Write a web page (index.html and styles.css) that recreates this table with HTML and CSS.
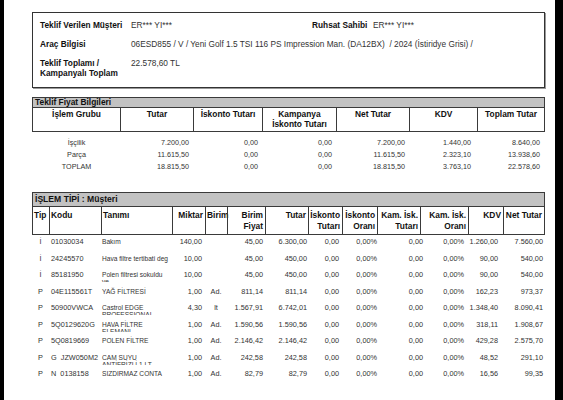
FILE: index.html
```html
<!DOCTYPE html>
<html lang="tr">
<head>
    <meta charset="UTF-8">
    <meta name="viewport" content="width=device-width, initial-scale=1.0">
    <title>Teklif</title>
    <link rel="stylesheet" href="styles.css">
</head>
<body>
    <div class="page">
        <!-- müşteri / araç -->
        <div class="info-box">
            <div class="info-row">
                <div class="info-label">Teklif Verilen Müşteri</div>
                <div class="info-value short">ER*** YI***</div>
                <div class="info-label owner">Ruhsat Sahibi</div>
                <div class="info-value">ER*** YI***</div>
            </div>
            <div class="info-row">
                <div class="info-label">Araç Bilgisi</div>
                <div class="info-value">06ESD855 / V / Yeni Golf 1.5 TSI 116 PS Impression Man. (DA12BX)&nbsp; / 2024 (İstiridye Grisi) /</div>
            </div>
            <div class="info-row">
                <div class="info-label">Teklif Toplamı /<br>Kampanyalı Toplam</div>
                <div class="info-value">22.578,60 TL</div>
            </div>
        </div>

        <!-- fiyat bilgileri -->
        <div class="price-section">
            <div class="bar price-bar">Teklif Fiyat Bilgileri</div>
            <div class="price-head">
                <div>İşlem Grubu</div>
                <div>Tutar</div>
                <div>İskonto Tutarı</div>
                <div>Kampanya<br>İskonto Tutarı</div>
                <div>Net Tutar</div>
                <div>KDV</div>
                <div>Toplam Tutar</div>
            </div>
            <div class="price-row">
                <div>İşçilik</div><div>7.200,00</div><div>0,00</div><div>0,00</div><div>7.200,00</div><div>1.440,00</div><div>8.640,00</div>
            </div>
            <div class="price-row">
                <div>Parça</div><div>11.615,50</div><div>0,00</div><div>0,00</div><div>11.615,50</div><div>2.323,10</div><div>13.938,60</div>
            </div>
            <div class="price-row">
                <div>TOPLAM</div><div>18.815,50</div><div>0,00</div><div>0,00</div><div>18.815,50</div><div>3.763,10</div><div>22.578,60</div>
            </div>
        </div>

        <!-- işlem listesi -->
        <div class="job-section">
            <div class="bar job-bar">İŞLEM TİPİ : Müşteri</div>
            <div class="job-head">
                <div class="left">Tip</div>
                <div class="left">Kodu</div>
                <div class="left">Tanımı</div>
                <div>Miktar</div>
                <div class="left">Birim</div>
                <div>Birim<br>Fiyat</div>
                <div>Tutar</div>
                <div>İskonto<br>Tutarı</div>
                <div>İskonto<br>Oranı</div>
                <div>Kam. İsk.<br>Tutarı</div>
                <div>Kam. İsk.<br>Oranı</div>
                <div>KDV</div>
                <div>Net Tutar</div>
            </div>
            <div class="job-row">
                <div class="tip">İ</div><div class="code">01030034</div><div class="desc">Bakım</div><div>140,00</div><div class="unit"></div><div>45,00</div><div>6.300,00</div><div>0,00</div><div>0,00%</div><div>0,00</div><div>0,00%</div><div>1.260,00</div><div>7.560,00</div>
            </div>
            <div class="job-row">
                <div class="tip">İ</div><div class="code">24245570</div><div class="desc">Hava filtre tertibati deg</div><div>10,00</div><div class="unit"></div><div>45,00</div><div>450,00</div><div>0,00</div><div>0,00%</div><div>0,00</div><div>0,00%</div><div>90,00</div><div>540,00</div>
            </div>
            <div class="job-row">
                <div class="tip">İ</div><div class="code">85181950</div><div class="desc">Polen filtresi sokuldu ve</div><div>10,00</div><div class="unit"></div><div>45,00</div><div>450,00</div><div>0,00</div><div>0,00%</div><div>0,00</div><div>0,00%</div><div>90,00</div><div>540,00</div>
            </div>
            <div class="job-row">
                <div class="tip">P</div><div class="code">04E115561T</div><div class="desc">YAĞ FİLTRESİ</div><div>1,00</div><div class="unit">Ad.</div><div>811,14</div><div>811,14</div><div>0,00</div><div>0,00%</div><div>0,00</div><div>0,00%</div><div>162,23</div><div>973,37</div>
            </div>
            <div class="job-row">
                <div class="tip">P</div><div class="code">50900VWCA</div><div class="desc">Castrol EDGE PROFESSIONAL</div><div>4,30</div><div class="unit">lt</div><div>1.567,91</div><div>6.742,01</div><div>0,00</div><div>0,00%</div><div>0,00</div><div>0,00%</div><div>1.348,40</div><div>8.090,41</div>
            </div>
            <div class="job-row">
                <div class="tip">P</div><div class="code">5Q0129620G</div><div class="desc">HAVA FİLTRE ELEMANI</div><div>1,00</div><div class="unit">Ad.</div><div>1.590,56</div><div>1.590,56</div><div>0,00</div><div>0,00%</div><div>0,00</div><div>0,00%</div><div>318,11</div><div>1.908,67</div>
            </div>
            <div class="job-row">
                <div class="tip">P</div><div class="code">5Q0819669</div><div class="desc">POLEN FİLTRE</div><div>1,00</div><div class="unit">Ad.</div><div>2.146,42</div><div>2.146,42</div><div>0,00</div><div>0,00%</div><div>0,00</div><div>0,00%</div><div>429,28</div><div>2.575,70</div>
            </div>
            <div class="job-row">
                <div class="tip">P</div><div class="code">G  JZW050M2</div><div class="desc">CAM SUYU ANTİFRİZLİ 1 LT</div><div>1,00</div><div class="unit">Ad.</div><div>242,58</div><div>242,58</div><div>0,00</div><div>0,00%</div><div>0,00</div><div>0,00%</div><div>48,52</div><div>291,10</div>
            </div>
            <div class="job-row">
                <div class="tip">P</div><div class="code">N  0138158</div><div class="desc">SIZDIRMAZ CONTA</div><div>1,00</div><div class="unit">Ad.</div><div>82,79</div><div>82,79</div><div>0,00</div><div>0,00%</div><div>0,00</div><div>0,00%</div><div>16,56</div><div>99,35</div>
            </div>
        </div>
    </div>
</body>
</html>
```

FILE: styles.css
```css
* {
    box-sizing: border-box;
}

body {
    margin: 0;
    background: #000;
    font-family: "Liberation Sans", Arial, sans-serif;
    color: #222;
}

.page {
    width: 551px;
    min-height: 400px;
    margin-left: 4px;
    padding: 12px 10px 0 28px;
    background: #fff;
}

/* üst kutu */
.info-box {
    border: 1px solid #333;
    box-shadow: 1px 1px 0 #999;
    padding: 7px 8px 9px 7px;
}

.info-row {
    display: flex;
    font-size: 8.3px;
    line-height: 10px;
}
.info-row + .info-row {
    margin-top: 9px;
}

.info-label {
    width: 91px;
    font-weight: bold;
    color: #111;
}
.info-label.owner {
    width: 61px;
}
.info-value {
    color: #333;
}
.info-value.short {
    width: 181px;
}

/* gri başlık */
.bar {
    background: #c2c2c2;
    border: 1px solid #3a3a3a;
    font-weight: bold;
    color: #111;
    padding-left: 2px;
}

/* teklif fiyat bilgileri */
.price-section {
    margin-top: 9px;
}
.price-bar {
    height: 11px;
    font-size: 8.4px;
    line-height: 9px;
}

.price-head,
.price-row {
    display: grid;
    grid-template-columns: 87px 73px 69px 74px 73px 68px 67px;
}

.price-head {
    height: 24px;
    border: 1px solid #3a3a3a;
    border-top: none;
}
.price-head div {
    padding-top: 1px;
    text-align: center;
    font-size: 8.4px;
    line-height: 10px;
    font-weight: bold;
    color: #111;
}
.price-head div + div {
    border-left: 1px solid #3a3a3a;
}

.price-row {
    height: 12px;
    padding: 0 1px;
    font-size: 7.2px;
    line-height: 12px;
    color: #333;
}
.price-row:nth-child(3) {
    margin-top: 5px;
}
.price-row div {
    text-align: right;
    padding-right: 4px;
}
.price-row div:first-child {
    text-align: center;
    padding-right: 0;
}
.price-row div:nth-child(6) {
    padding-right: 6px;
}

/* işlem tipi */
.job-section {
    margin-top: 19px;
}
.job-bar {
    height: 15px;
    font-size: 8.6px;
    line-height: 13px;
}

.job-head {
    display: grid;
    grid-template-columns: 16px 52px 71px 33px 22px 38px 43px 34px 35px 43px 48px 35px 41px;
    height: 28px;
    border: 1px solid #3a3a3a;
    border-top: none;
}
.job-head div {
    padding: 3px 2px 0 1px;
    text-align: right;
    font-size: 8.4px;
    line-height: 10.5px;
    font-weight: bold;
    color: #111;
}
.job-head div + div {
    border-left: 1px solid #3a3a3a;
}
.job-head .left {
    text-align: left;
}

.job-row {
    display: grid;
    grid-template-columns: 17px 52px 71px 33px 22px 38px 42px 32px 38px 46px 41px 34px 45px;
    height: 16.5px;
    font-size: 7.3px;
    line-height: 7px;
    color: #333;
}
.job-row div {
    padding-top: 3px;
    text-align: right;
}
.job-row .tip {
    text-align: center;
}
.job-row .code {
    text-align: left;
    padding-left: 2px;
    white-space: pre;
}
.job-row .desc {
    text-align: left;
    padding: 3px 2.5px 0 1px;
    font-size: 6.6px;
    max-height: 14px;
    overflow: hidden;
}
.job-row .unit {
    text-align: center;
}
.job-row div:nth-child(4) {
    padding-right: 3px;
}
.job-row div:nth-child(6) {
    padding-right: 2px;
}
```
